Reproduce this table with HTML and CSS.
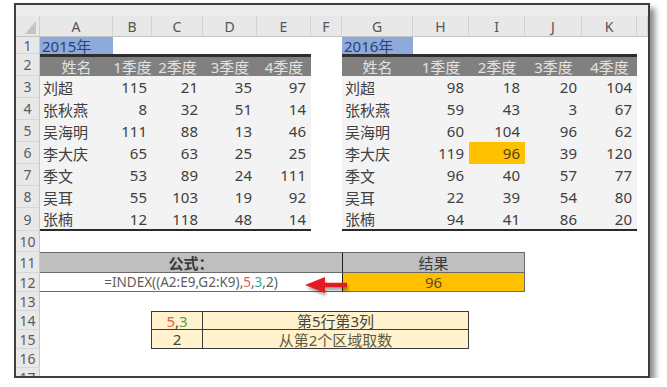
FILE: index.html
```html
<!DOCTYPE html>
<html lang="zh">
<head>
<meta charset="utf-8">
<title>INDEX 多区域示例</title>
<link rel="stylesheet" href="styles.css">
</head>
<body>
<div class="frame">
  <div class="sheet">
    <div class="topstrip"></div>

    <div class="corner"><svg width="24" height="21" viewBox="0 0 24 21"><polygon points="20,5 20,18 9,18" fill="#c4c4c4"/></svg></div>
    <div class="ch">A</div><div class="ch">B</div><div class="ch">C</div><div class="ch">D</div><div class="ch">E</div><div class="ch">F</div><div class="ch">G</div><div class="ch">H</div><div class="ch">I</div><div class="ch">J</div><div class="ch">K</div><div class="ch"></div>

    <!-- row 1 -->
    <div class="rh">1</div>
    <div class="c year">2015年</div><div class="c"></div><div class="c"></div><div class="c"></div><div class="c"></div><div class="c"></div>
    <div class="c year">2016年</div><div class="c"></div><div class="c"></div><div class="c"></div><div class="c"></div><div class="c"></div>

    <!-- row 2 -->
    <div class="rh">2</div>
    <div class="c hd ctr">姓名</div><div class="c hd ctr">1季度</div><div class="c hd ctr">2季度</div><div class="c hd ctr">3季度</div><div class="c hd ctr">4季度</div><div class="c"></div>
    <div class="c hd ctr">姓名</div><div class="c hd ctr">1季度</div><div class="c hd ctr">2季度</div><div class="c hd ctr">3季度</div><div class="c hd ctr">4季度</div><div class="c"></div>

    <!-- row 3 -->
    <div class="rh">3</div>
    <div class="c d nm">刘超</div><div class="c d n">115</div><div class="c d n">21</div><div class="c d n">35</div><div class="c d n">97</div><div class="c"></div>
    <div class="c d nm">刘超</div><div class="c d n">98</div><div class="c d n">18</div><div class="c d n">20</div><div class="c d n">104</div><div class="c"></div>

    <!-- row 4 -->
    <div class="rh">4</div>
    <div class="c d nm">张秋燕</div><div class="c d n">8</div><div class="c d n">32</div><div class="c d n">51</div><div class="c d n">14</div><div class="c"></div>
    <div class="c d nm">张秋燕</div><div class="c d n">59</div><div class="c d n">43</div><div class="c d n">3</div><div class="c d n">67</div><div class="c"></div>

    <!-- row 5 -->
    <div class="rh">5</div>
    <div class="c d nm">吴海明</div><div class="c d n">111</div><div class="c d n">88</div><div class="c d n">13</div><div class="c d n">46</div><div class="c"></div>
    <div class="c d nm">吴海明</div><div class="c d n">60</div><div class="c d n">104</div><div class="c d n">96</div><div class="c d n">62</div><div class="c"></div>

    <!-- row 6 -->
    <div class="rh">6</div>
    <div class="c d nm">李大庆</div><div class="c d n">65</div><div class="c d n">63</div><div class="c d n">25</div><div class="c d n">25</div><div class="c"></div>
    <div class="c d nm">李大庆</div><div class="c d n">119</div><div class="c d n hit">96</div><div class="c d n">39</div><div class="c d n">120</div><div class="c"></div>

    <!-- row 7 -->
    <div class="rh">7</div>
    <div class="c d nm">季文</div><div class="c d n">53</div><div class="c d n">89</div><div class="c d n">24</div><div class="c d n">111</div><div class="c"></div>
    <div class="c d nm">季文</div><div class="c d n">96</div><div class="c d n">40</div><div class="c d n">57</div><div class="c d n">77</div><div class="c"></div>

    <!-- row 8 -->
    <div class="rh">8</div>
    <div class="c d nm">吴耳</div><div class="c d n">55</div><div class="c d n">103</div><div class="c d n">19</div><div class="c d n">92</div><div class="c"></div>
    <div class="c d nm">吴耳</div><div class="c d n">22</div><div class="c d n">39</div><div class="c d n">54</div><div class="c d n">80</div><div class="c"></div>

    <!-- row 9 -->
    <div class="rh">9</div>
    <div class="c d nm last">张楠</div><div class="c d n last">12</div><div class="c d n last">118</div><div class="c d n last">48</div><div class="c d n last">14</div><div class="c"></div>
    <div class="c d nm last">张楠</div><div class="c d n last">94</div><div class="c d n last">41</div><div class="c d n last">86</div><div class="c d n last">20</div><div class="c"></div>

    <!-- row 10 -->
    <div class="rh">10</div>
    <div class="c span12"></div>

    <!-- row 11 -->
    <div class="rh">11</div>
    <div class="c span6 lbl ctr strong">公式：</div>
    <div class="c span3 lbl lbl-right ctr">结果</div>
    <div class="c span3"></div>

    <!-- row 12 -->
    <div class="rh">12</div>
    <div class="c span6 fml ctr">=INDEX((A2:E9,G2:K9),<span class="red">5</span>,<span class="teal">3</span>,2)</div>
    <div class="c span3 res ctr">96</div>
    <div class="c span3"></div>

    <!-- row 13 -->
    <div class="rh">13</div>
    <div class="c span12"></div>

    <!-- row 14 -->
    <div class="rh">14</div>
    <div class="c span2"></div>
    <div class="c note note-a ctr"><span class="orange">5</span>,<span class="green">3</span></div>
    <div class="c span5 note note-b ctr">第5行第3列</div>
    <div class="c span4"></div>

    <!-- row 15 -->
    <div class="rh">15</div>
    <div class="c span2"></div>
    <div class="c note note-c ctr">2</div>
    <div class="c span5 note note-d ctr olive">从第2个区域取数</div>
    <div class="c span4"></div>

    <!-- row 16 -->
    <div class="rh">16</div>
    <div class="c span12"></div>

    <!-- row 17 (cut off by the window edge) -->
    <div class="rh rh-cut"><span class="cut-num">17</span></div>
    <div class="c span12"></div>
  </div>

  <svg class="arrow" width="50" height="24" viewBox="0 0 50 24">
    <defs>
      <filter id="sh" x="-20%" y="-40%" width="140%" height="180%">
        <feGaussianBlur stdDeviation="1.6"/>
      </filter>
    </defs>
    <path d="M4 13 L23 5 L23 10.5 L45 10.5 L45 15.5 L23 15.5 L23 21 Z" fill="rgba(0,0,0,0.35)" filter="url(#sh)"/>
    <path d="M2 10 L22 2 L22 7.8 L44 7.8 L44 12.2 L22 12.2 L22 18 Z" fill="#e5191f"/>
  </svg>
</div>
</body>
</html>
```

FILE: styles.css
```css
html, body {
  margin: 0;
  padding: 0;
  background: #ffffff;
}

body {
  font-family: "Noto Sans", "Noto Sans CJK SC", sans-serif;
  font-size: 15px;
  color: #404040;
}

.frame {
  position: relative;
  margin: 3px 0 0 14px;
  width: 632px;
  height: 371px;
  border: 2px solid #3e3e3e;
  overflow: hidden;
  background: #ffffff;
  box-shadow: 5px 5px 6px rgba(0, 0, 0, 0.45);
}

.sheet {
  display: grid;
  grid-template-columns: 24px 73px 39px 51px 54px 54px 31px 71px 56px 56px 57px 55px 11px;
  grid-template-rows: 11px 21px 17px 22px 22px 22px 22px 22px 22px 22px 23px 21px 21px 19px 19px 19px 19px 19px 8px;
}

.topstrip {
  grid-column: 1 / -1;
  background: #ececec;
}

.corner {
  background: #e8e8e8;
  border-right: 1px solid #cfcfcf;
  border-bottom: 1px solid #c4c4c4;
  box-sizing: border-box;
  line-height: 0;
}

.ch {
  background: #e8e8e8;
  border-right: 1px solid #d2d2d2;
  border-bottom: 1px solid #c4c4c4;
  box-sizing: border-box;
  display: flex;
  align-items: center;
  justify-content: center;
  font-family: "Noto Sans", sans-serif;
  font-size: 14px;
  color: #555555;
}

.rh {
  background: #e8e8e8;
  border-right: 1px solid #c8c8c8;
  border-bottom: 1px solid #d6d6d6;
  box-sizing: border-box;
  display: flex;
  align-items: center;
  justify-content: center;
  font-family: "Noto Sans", sans-serif;
  font-size: 14px;
  color: #5b5b5b;
  overflow: hidden;
}

.rh-cut {
  align-items: flex-start;
  border-bottom: 0;
}

.cut-num {
  display: block;
  height: 8px;
  line-height: 19px;
  overflow: hidden;
}

.c {
  box-sizing: border-box;
  display: flex;
  align-items: center;
  white-space: nowrap;
  overflow: visible;
  min-width: 0;
}

.ctr { justify-content: center; }

.year {
  background: #8eaadb;
  color: #2d4170;
  padding-left: 2px;
}

.hd {
  background: #808080;
  color: #e2e2e2;
  border-top: 3px solid #2e2e2e;
}

.d { background: #f3f3f3; }

.nm { padding-left: 3px; }

.n {
  justify-content: flex-end;
  padding-right: 5px;
}

.hit {
  background: #ffc000;
  color: #4f4120;
}

.last { border-bottom: 2px solid #2a2a2a; }

.span2 { grid-column: span 2; }
.span3 { grid-column: span 3; }
.span4 { grid-column: span 4; }
.span5 { grid-column: span 5; }
.span6 { grid-column: span 6; }
.span12 { grid-column: span 12; }

.lbl {
  background: #bfbfbf;
  color: #3a3a3a;
  border-top: 1px solid #6a6a6a;
  border-bottom: 1px solid #6a6a6a;
}

.strong { font-weight: 700; }

.lbl-right {
  border-left: 1px solid #1e1e1e;
  border-right: 1px solid #6a6a6a;
}

.fml {
  font-size: 13.5px;
  color: #5e5e5e;
  border-bottom: 1px solid #6a6a6a;
}

.res {
  background: #ffc000;
  color: #5a4a22;
  border-left: 1px solid #1e1e1e;
  border-right: 1px solid #6a6a6a;
  border-bottom: 1px solid #6a6a6a;
}

.red { color: #e4585c; }
.teal { color: #3aa9a0; }
.orange { color: #e2603a; }
.green { color: #4aa64a; }

.note {
  background: #fff2cc;
  color: #444444;
  border-color: #3a3a3a;
  border-style: solid;
  border-width: 0;
}

.note-a {
  border-width: 1px 1px 1px 1px;
  margin-left: -1px;
}

.note-b { border-width: 1px 1px 1px 0; }

.note-c {
  border-width: 0 1px 1px 1px;
  margin-left: -1px;
}

.note-d { border-width: 0 1px 1px 0; }

.olive { color: #5e5a44; }

.arrow {
  position: absolute;
  left: 287px;
  top: 270px;
}
```
